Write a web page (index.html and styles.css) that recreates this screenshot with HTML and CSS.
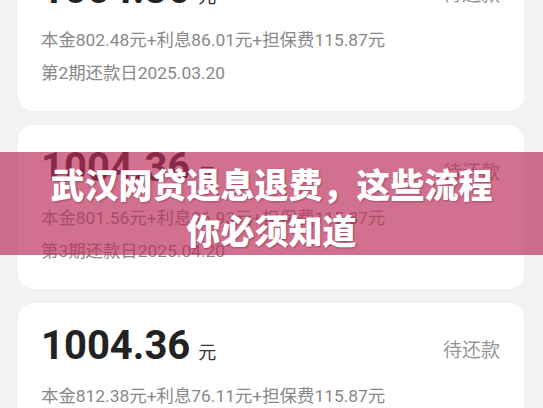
FILE: index.html
```html
<!DOCTYPE html>
<html lang="zh-CN">

<head>
    <meta charset="UTF-8">
    <meta name="viewport" content="width=device-width, initial-scale=1.0">
    <title>武汉网贷退息退费，这些流程你必须知道</title>
    <link rel="stylesheet" href="styles.css">
</head>

<body>
    <div class="bill-list">
        <div class="bill-card">
            <div class="amount-row">
                <div class="amount">1004.36<span class="unit">元</span></div>
                <div class="status">待还款</div>
            </div>
            <p class="detail">本金802.48元+利息86.01元+担保费115.87元</p>
            <p class="due">第2期还款日2025.03.20</p>
        </div>
        <div class="bill-card">
            <div class="amount-row">
                <div class="amount">1004.36<span class="unit">元</span></div>
                <div class="status">待还款</div>
            </div>
            <p class="detail">本金801.56元+利息86.93元+担保费115.87元</p>
            <p class="due">第3期还款日2025.04.20</p>
        </div>
        <div class="bill-card">
            <div class="amount-row">
                <div class="amount">1004.36<span class="unit">元</span></div>
                <div class="status">待还款</div>
            </div>
            <p class="detail">本金812.38元+利息76.11元+担保费115.87元</p>
            <p class="due">第4期还款日2025.05.20</p>
        </div>
    </div>

    <div class="banner">
        <h1>武汉网贷退息退费，这些流程<br>你必须知道</h1>
    </div>
</body>

</html>
```

FILE: styles.css
```css
body {
    font-family: Roboto, "Noto Sans CJK SC", sans-serif;
    background-color: #f2f2f4;
    margin: 0;
    padding: 0;
    height: 408px;
    overflow: hidden;
    position: relative;
}

.bill-list {
    display: flex;
    flex-direction: column;
    gap: 14px;
    margin: -53px 19px 0 18px;
}

.bill-card {
    background-color: white;
    border-radius: 16px;
    padding: 25px 24px 26px 23px;
}

.amount-row {
    display: flex;
    justify-content: space-between;
    align-items: center;
    height: 40px;
}

.amount {
    font-size: 40px;
    font-weight: 700;
    color: #222;
    line-height: 40px;
}

.unit {
    font-family: "Noto Sans CJK SC", sans-serif;
    font-size: 18px;
    font-weight: 400;
    color: #333;
    margin-left: 8px;
}

.status {
    font-family: "Noto Sans CJK SC", sans-serif;
    font-size: 19px;
    color: #959595;
}

.detail,
.due {
    font-size: 17.4px;
    color: #888;
    line-height: 24px;
    margin: 0;
}

.detail {
    margin-top: 16px;
}

.due {
    margin-top: 9px;
}

.banner {
    position: absolute;
    left: 0;
    right: 0;
    top: 152px;
    height: 103px;
    background-color: rgba(187, 46, 90, 0.68);
    box-sizing: border-box;
    padding-top: 9px;
    text-align: center;
}

.banner h1 {
    font-family: "Noto Sans CJK SC", sans-serif;
    font-weight: 900;
    font-size: 34px;
    line-height: 46px;
    color: white;
    margin: 0;
    text-shadow: 1px 1px 2px rgba(80, 0, 30, 0.35);
}
```
